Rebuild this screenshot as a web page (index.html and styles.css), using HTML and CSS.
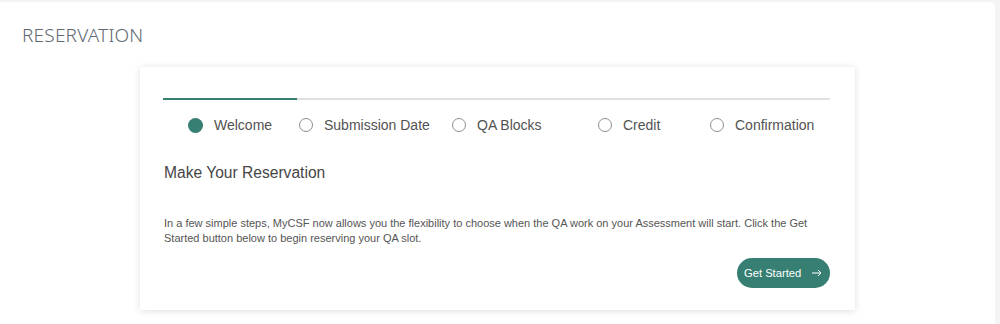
FILE: index.html
```html
<!DOCTYPE html>
<html lang="en">
<head>
<meta charset="utf-8">
<title>Reservation</title>
<link rel="stylesheet" href="styles.css">
</head>
<body>
<div class="panel">
  <h1 class="page-title">RESERVATION</h1>
  <section class="card">
    <div class="progress">
      <div class="progress-fill"></div>
    </div>
    <ol class="steps">
      <li class="step step-active"><span class="dot"></span><span class="label">Welcome</span></li>
      <li class="step"><span class="dot"></span><span class="label">Submission Date</span></li>
      <li class="step"><span class="dot"></span><span class="label">QA Blocks</span></li>
      <li class="step"><span class="dot"></span><span class="label">Credit</span></li>
      <li class="step"><span class="dot"></span><span class="label">Confirmation</span></li>
    </ol>
    <h2 class="card-title">Make Your Reservation</h2>
    <p class="card-text">In a few simple steps, MyCSF now allows you the flexibility to choose when the QA work on your Assessment will start. Click the Get Started button below to begin reserving your QA slot.</p>
    <div class="actions">
      <button class="btn" type="button"><span>Get Started</span>
        <svg class="arrow" width="10" height="8" viewBox="0 0 10 8" aria-hidden="true"><path d="M0 4H9M6 1L9 4L6 7" fill="none" stroke="#ffffff" stroke-width="1"/></svg>
      </button>
    </div>
  </section>
</div>
</body>
</html>
```
FILE: styles.css
```css
* { box-sizing: border-box; }
html, body { margin: 0; padding: 0; }
body {
  background: #f4f4f4;
  font-family: "Liberation Sans", Arial, sans-serif;
  color: #525252;
}
.panel {
  margin: 2px 5px 0 0;
  background: #ffffff;
  border-top-right-radius: 5px;
  height: 322px;
  padding: 21px 0 0 22px;
  overflow: hidden;
}
.page-title {
  margin: 0;
  font-family: "Noto Sans", "Open Sans", sans-serif;
  font-size: 19px;
  font-weight: 300;
  letter-spacing: 0.2px;
  color: #5f6a73;
  line-height: 24px;
}
.card {
  margin: 20px 0 0 118px;
  width: 715px;
  height: 243px;
  background: #fff;
  box-shadow: 0 1px 7px rgba(0, 0, 0, 0.13);
  padding: 31px 25px 0 23px;
}
.progress {
  height: 2px;
  background: #e0e0e0;
}
.progress-fill {
  width: 134px;
  height: 2px;
  background: #367f72;
}
.steps {
  list-style: none;
  margin: 0;
  padding: 0 0 0 25px;
  display: grid;
  grid-template-columns: 111px 153px 146px 112px auto;
  height: 50px;
  align-items: center;
}
.step {
  display: flex;
  align-items: center;
  gap: 11px;
  font-size: 14px;
  color: #525252;
  white-space: nowrap;
}
.dot {
  width: 14px;
  height: 14px;
  border-radius: 50%;
  border: 1px solid #8d8d8d;
  flex: none;
}
.step-active .dot {
  width: 15px;
  height: 15px;
  border: none;
  background: #367f72;
}
.card-title {
  margin: 12px 0 0 1px;
  font-size: 15.6px;
  font-weight: 400;
  color: #464646;
  line-height: 22px;
}
.card-text {
  margin: 32px 0 0 1px;
  font-size: 11px;
  line-height: 15px;
  color: #555555;
}
.actions {
  display: flex;
  justify-content: flex-end;
  margin-top: 12px;
}
.btn {
  height: 30px;
  width: 93px;
  border: none;
  border-radius: 15px;
  background: #367f72;
  color: #ffffff;
  font-family: inherit;
  font-size: 11.2px;
  padding: 0 8px 0 7px;
  display: flex;
  align-items: center;
  justify-content: space-between;
}
.arrow {
  display: block;
}
```
